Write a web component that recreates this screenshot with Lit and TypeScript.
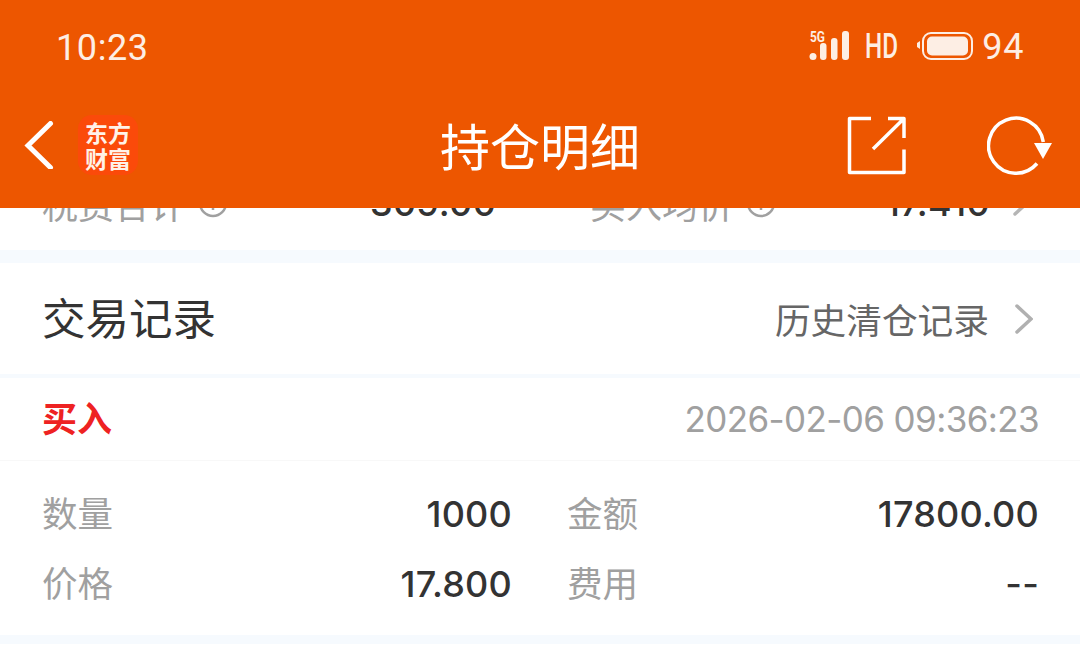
import { LitElement, html, css } from "lit";
import { customElement } from "lit/decorators.js";

@customElement("app-root")
export class AppRoot extends LitElement {
  static styles = css`
    :host {
      display: block;
      width: 1080px;
      height: 659px;
      overflow: hidden;
      background: #fff;
      font-family: Roboto, "Noto Sans CJK SC", sans-serif;
      color: #333;
    }
    .header { height: 208px; background: #ed5600; color: #fff; display: flex; flex-direction: column; }
    .status { height: 92px; display: flex; align-items: center; justify-content: space-between; padding: 4px 56px 0; box-sizing: border-box; }
    .time { font-size: 36px; color: #fdeee4; letter-spacing: 0.6px; }
    .status-right { display: flex; align-items: center; }
    .batt { font-size: 36px; color: #fdeee4; letter-spacing: 0.6px; margin-left: 8px; margin-bottom: 3px; }
    .nav { height: 116px; display: grid; grid-template-columns: 1fr auto 1fr; align-items: start; }
    .nav-left { display: flex; align-items: center; padding: 23px 0 0 24px; gap: 24px; }
    .logo { width: 60px; height: 60px; flex: none; border-radius: 14px; background: #fb4a0a; display: flex; flex-direction: column; align-items: center; justify-content: center; font-size: 23px; line-height: 26px; font-weight: 700; color: #fff2e8; font-family: "Noto Sans CJK SC", sans-serif; }
    .title { font-size: 50px; line-height: 60px; padding-top: 22px; color: #fff; font-family: "Noto Sans CJK SC", sans-serif; }
    .nav-right { display: flex; justify-content: flex-end; padding: 23px 27px 0 0; gap: 80px; }
    .clip { height: 42px; overflow: hidden; }
    .clip-row { display: flex; margin-top: -30px; height: 50px; align-items: center; padding: 0 42px; font-size: 36px; line-height: 50px; }
    .clip-label { color: #a0a0a0; display: flex; align-items: center; gap: 12px; font-family: "Noto Sans CJK SC", sans-serif; }
    .w1 { width: 328px; }
    .w2 { width: 220px; }
    .w3 { width: 295px; }
    .w4 { width: 128px; }
    .clip-val { font-weight: 500; font-size: 36px; letter-spacing: 0.4px; color: #333; font-family: Inter, sans-serif; }
    .band { background: #f6fafe; }
    .b1 { height: 13px; }
    .b2 { height: 4px; }
    .b3 { height: 9px; }
    .sec { height: 111px; display: flex; align-items: center; justify-content: space-between; padding: 0 47px 0 42px; }
    .sec-title { font-size: 43.5px; color: #333; line-height: 60px; padding-bottom: 4px; font-family: "Noto Sans CJK SC", sans-serif; }
    .sec-link { display: flex; align-items: center; gap: 26px; font-size: 35.7px; color: #666; font-family: "Noto Sans CJK SC", sans-serif; }
    .rec-head { height: 82px; display: flex; align-items: center; justify-content: space-between; padding: 0 41px 0 42px; border-bottom: 1px solid #f8f8f8; }
    .buy { font-size: 35px; font-weight: 700; padding-bottom: 6px; color: #ee2222; font-family: "Noto Sans CJK SC", sans-serif; }
    .date { font-size: 35px; letter-spacing: -0.6px; color: #a0a0a0; font-family: Inter, sans-serif; }
    .grid { display: grid; grid-template-columns: 470px 472px; column-gap: 55px; padding: 18px 41px 16px 42px; height: 140px; }
    .cell { display: flex; justify-content: space-between; align-items: center; height: 70px; }
    .k { font-size: 35.5px; padding-bottom: 6px; color: #a0a0a0; font-family: "Noto Sans CJK SC", sans-serif; }
    .v { font-size: 36px; font-weight: 500; letter-spacing: 0.2px; color: #333; font-family: Inter, sans-serif; }
    svg { display: block; flex: none; }
    .ic-text { font-family: Roboto, sans-serif; }
    .hd { font-family: Roboto, sans-serif; font-weight: 500; }
  `;

  render() {
    return html`
      <div class="header">
        <div class="status">
          <span class="time">10:23</span>
          <div class="status-right">
            <svg width="165" height="36" viewBox="0 0 165 36">
              <g fill="#fdeee4">
                <text class="ic-text" x="1" y="12" font-size="14" font-weight="700" textLength="15" lengthAdjust="spacingAndGlyphs">5G</text>
                <circle cx="4" cy="26.500" r="3.500"/>
                <rect x="11" y="13" width="6.500" height="17" rx="3"/>
                <rect x="22" y="8" width="6.500" height="22" rx="3"/>
                <rect x="33" y="1" width="7" height="29" rx="3"/>
                <text class="hd" x="56" y="28" font-size="35" textLength="33" lengthAdjust="spacingAndGlyphs">HD</text>
                <path d="M108 13 L111 11 V19 L108 17 Z"/>
              </g>
              <rect x="114" y="3" width="49" height="26" rx="8" fill="none" stroke="#fdeee4" stroke-width="2"/>
              <rect x="118" y="6.500" width="41" height="19" rx="5" fill="#fdeee4"/>
            </svg>
            <span class="batt">94</span>
          </div>
        </div>
        <div class="nav">
          <div class="nav-left">
            <svg width="30" height="48" viewBox="0 0 30 48"><path d="M26.500 2.500 L4 24.500 L26.500 46.500" fill="none" stroke="#fff" stroke-width="5" stroke-linecap="round" stroke-linejoin="miter"/></svg>
            <div class="logo"><span>东方</span><span>财富</span></div>
          </div>
          <div class="title">持仓明细</div>
          <div class="nav-right">
            <svg width="60" height="60" viewBox="0 0 60 60">
              <path d="M24 3.500 H2.500 V57.500 H57 V34.500 M41 3.500 H57 V23 M57 3.500 L26 34" fill="none" stroke="#fff" stroke-width="3.500" stroke-linejoin="round"/>
            </svg>
            <svg width="66" height="60" viewBox="0 0 66 60">
              <path d="M50 48.500 A27.500 27.500 0 1 1 56.300 27" fill="none" stroke="#fff" stroke-width="3.500"/>
              <path d="M47 28 H65 L56 44 Z" fill="#fff"/>
            </svg>
          </div>
        </div>
      </div>

      <div class="clip">
        <div class="clip-row">
          <span class="clip-label w1">税费合计 ${this.info()}</span>
          <span class="clip-val w2">309.00</span>
          <span class="clip-label w3">买入均价 ${this.info()}</span>
          <span class="clip-val w4">17.410</span>
          <svg width="16" height="26" viewBox="0 0 16 26"><path d="M2 2 L14 13 L2 24" fill="none" stroke="#b5b5b5" stroke-width="3.500" stroke-linecap="round"/></svg>
        </div>
      </div>
      <div class="band b1"></div>

      <div class="sec">
        <span class="sec-title">交易记录</span>
        <span class="sec-link">历史清仓记录
          <svg width="18" height="32" viewBox="0 0 18 32"><path d="M2 3 L16 16 L2 29" fill="none" stroke="#b0b0b0" stroke-width="3.500" stroke-linecap="round"/></svg>
        </span>
      </div>
      <div class="band b2"></div>

      <div class="rec-head">
        <span class="buy">买入</span>
        <span class="date">2026-02-06 09:36:23</span>
      </div>
      <div class="grid">
        <div class="cell"><span class="k">数量</span><span class="v">1000</span></div>
        <div class="cell"><span class="k">金额</span><span class="v">17800.00</span></div>
        <div class="cell"><span class="k">价格</span><span class="v">17.800</span></div>
        <div class="cell"><span class="k">费用</span><span class="v">--</span></div>
      </div>
      <div class="band b3"></div>
    `;
  }

  info() {
    return html`<svg width="30" height="30" viewBox="0 0 30 30"><circle cx="15" cy="15" r="13" fill="none" stroke="#a0a0a0" stroke-width="2.500"/><path d="M15 13 V22 M15 8 V10" stroke="#a0a0a0" stroke-width="2.500"/></svg>`;
  }
}
